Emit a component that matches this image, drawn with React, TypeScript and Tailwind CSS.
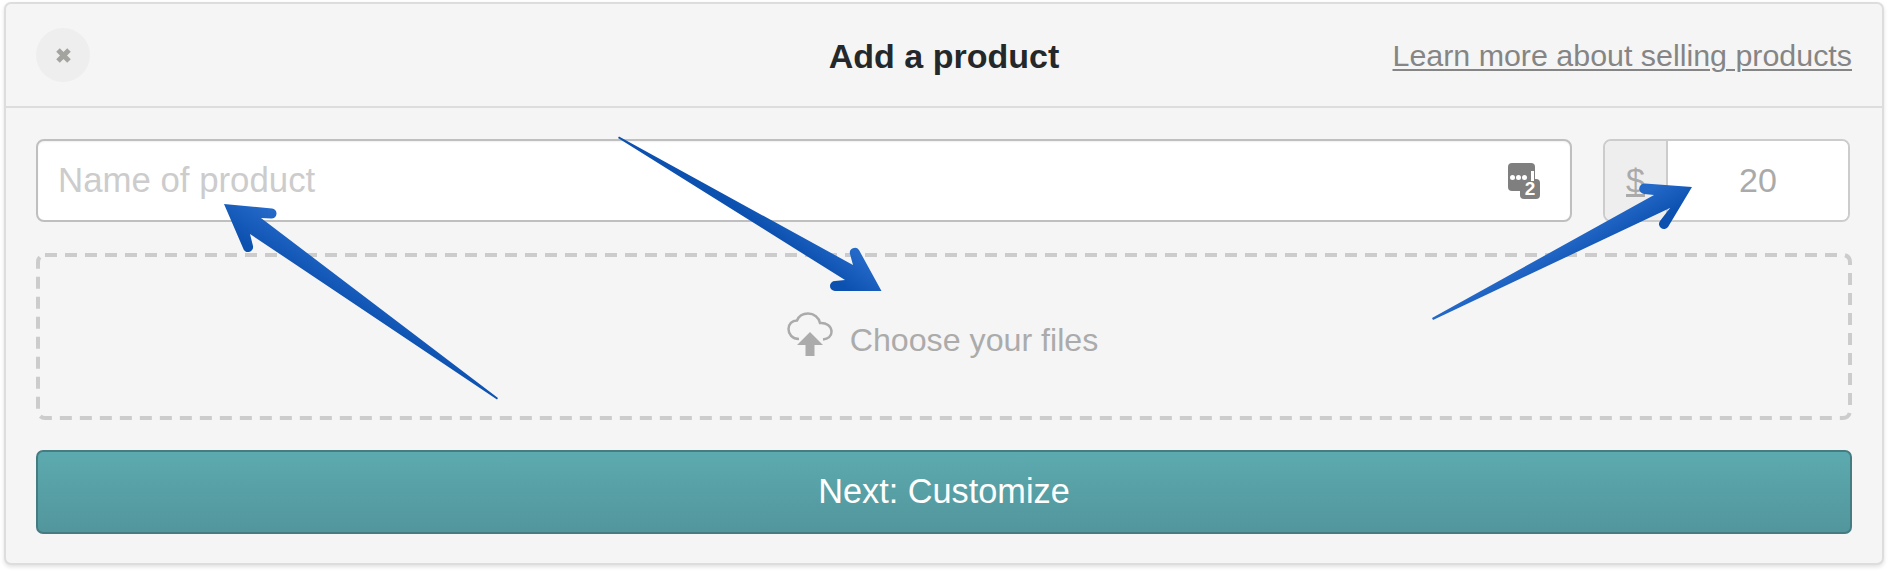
import React from 'react';

// blue annotation arrows drawn over the dialog
const Arrows = () => (
  <svg className="absolute left-0 top-0 pointer-events-none" width={1892} height={578} viewBox="0 0 1892 578" fill="none">
    <defs>
      <linearGradient id="arrowA" gradientUnits="userSpaceOnUse" x1="262" y1="205" x2="240" y2="240">
        <stop offset="0" stopColor="#2469c8" />
        <stop offset="1" stopColor="#0c50b0" />
      </linearGradient>
      <linearGradient id="arrowB" gradientUnits="userSpaceOnUse" x1="862" y1="258" x2="842" y2="285">
        <stop offset="0" stopColor="#2469c8" />
        <stop offset="1" stopColor="#0c50b0" />
      </linearGradient>
      <linearGradient id="arrowC" gradientUnits="userSpaceOnUse" x1="1652" y1="188" x2="1668" y2="215">
        <stop offset="0" stopColor="#2469c8" />
        <stop offset="1" stopColor="#0c50b0" />
      </linearGradient>
    </defs>
    <path fill="url(#arrowA)" d="M224 204 L272 208.5 A5 5 0 0 1 271 218.5 L261 218 L498 398 L497 399.500 L250 234 L253 246 A5 5 0 0 1 243 248 Z" />
    <path fill="url(#arrowB)" d="M881.500 291 L835 291 A5 5 0 0 1 835 281 L845 280 L618 138 L619 136.500 L853 265 L850 254 A5 5 0 0 1 859 250 Z" />
    <path fill="url(#arrowC)" d="M1692 187 L1645 183.500 A5 5 0 0 0 1644 194 L1654 195 L1432 318 L1433 320 L1670 208 L1660 221 A5 5 0 0 0 1668 227 Z" />
  </svg>
);

const CharCountIcon = () => (
  <div className="relative w-[32px] h-[36px] shrink-0">
    <div className="absolute left-0 top-0 w-[27px] h-[28px] rounded-[4px] bg-[#7f7f7f]" />
    <div className="absolute left-[12px] top-[16px] w-[20px] h-[20px] rounded-[4px] bg-[#7f7f7f] flex items-center justify-center text-white text-[19px] leading-none font-bold">
      2
    </div>
    <div className="absolute left-[2px] top-[12px] w-[5px] h-[5px] rounded-full bg-white" />
    <div className="absolute left-[8px] top-[12px] w-[5px] h-[5px] rounded-full bg-white" />
    <div className="absolute left-[14px] top-[12px] w-[5px] h-[5px] rounded-full bg-white" />
    <div className="absolute left-[23px] top-[8px] w-[3px] h-[10px] bg-white" />
  </div>
);

const CloudUpload = () => (
  <svg width={46} height={45} viewBox="0 0 46 45" className="shrink-0 mb-[5px]" fill="none">
    <path
      d="M12 27 C5 27 1.500 22 1.500 17 C1.500 12 5 8.500 10 8.500 C12 3.500 17 1.500 21 1.500 C27 1.500 32 5.500 33 11 C39 10.500 44.500 14 44.500 20 C44.500 24 41 27 36 27.500"
      stroke="#ababab"
      strokeWidth="2.5"
    />
    <path fill="#ababab" d="M23 20 L36 33 L27.500 33 L27.500 44 L18.500 44 L18.500 33 L10 33 Z" />
  </svg>
);

export default function App() {
  return (
    <div className="relative w-[1892px] h-[578px] bg-white overflow-hidden [font-family:'Liberation_Sans',Arial,sans-serif]">
      <div className="ml-[4px] mt-[2px] w-[1880px] h-[563px] rounded-[7px] border-2 border-[#ddd] bg-[#f5f5f5] shadow-[0_2px_4px_rgba(0,0,0,0.12)]">
        {/* header */}
        <div className="grid grid-cols-[1fr_auto_1fr] items-center h-[104px] pl-[30px] pr-[30px] border-b-2 border-[#ddd]">
          <div>
            <button className="w-[54px] h-[54px] rounded-full bg-[#eee] flex items-center justify-center">
              <svg width={17} height={17} viewBox="0 0 17 17">
                <path d="M3 3 L14 14 M14 3 L3 14" stroke="#a3a39f" strokeWidth="5" />
              </svg>
            </button>
          </div>
          <h1 className="pt-[2px] text-[34px] leading-none font-bold text-[#25282b]">Add a product</h1>
          <a className="justify-self-end text-[30.4px] leading-none text-[#858585] underline decoration-[1.5px] underline-offset-[3px]">
            Learn more about selling products
          </a>
        </div>

        {/* form */}
        <div className="flex flex-col pt-[31px] px-[30px]">
          <div className="flex gap-[31px]">
            <div className="flex items-center w-[1536px] h-[83px] rounded-[8px] border-2 border-[#bfbfbf] bg-white pl-[20px] pr-[30px] shadow-[inset_0_1px_2px_rgba(0,0,0,0.06)]">
              <input
                placeholder="Name of product"
                className="flex-1 bg-transparent text-[34.8px] outline-none placeholder:text-[#ccc]"
              />
              <CharCountIcon />
            </div>
            <div className="flex w-[247px] h-[83px] rounded-[8px] border-2 border-[#ccc] overflow-hidden">
              <div className="flex items-center justify-center w-[63px] bg-[#eee] border-r-2 border-[#ccc] text-[34px] text-[#aaa] underline">
                $
              </div>
              <input
                defaultValue="20"
                className="flex-1 min-w-0 bg-white text-center text-[34px] text-[#aaa] outline-none"
              />
            </div>
          </div>

          <div className="relative flex items-center justify-center gap-[17px] h-[167px] mt-[31px] pr-[3px]">
            {/* dashed outline has a longer dash than css border-dashed gives */}
            <svg className="absolute left-0 top-0 pointer-events-none" width={1816} height={167} fill="none">
              <rect x={2} y={2} width={1812} height={163} rx={7} stroke="#ccc" strokeWidth={4} strokeDasharray="12 8" />
            </svg>
            <CloudUpload />
            <span className="pt-[7px] text-[32.2px] text-[#ababab]">Choose your files</span>
          </div>

          <button className="h-[84px] mt-[30px] rounded-[7px] border-2 border-[#457c82] bg-linear-to-b from-[#5caaaf] to-[#52969c] text-[34.3px] text-white">
            Next: Customize
          </button>
        </div>
      </div>
      <Arrows />
    </div>
  );
}
